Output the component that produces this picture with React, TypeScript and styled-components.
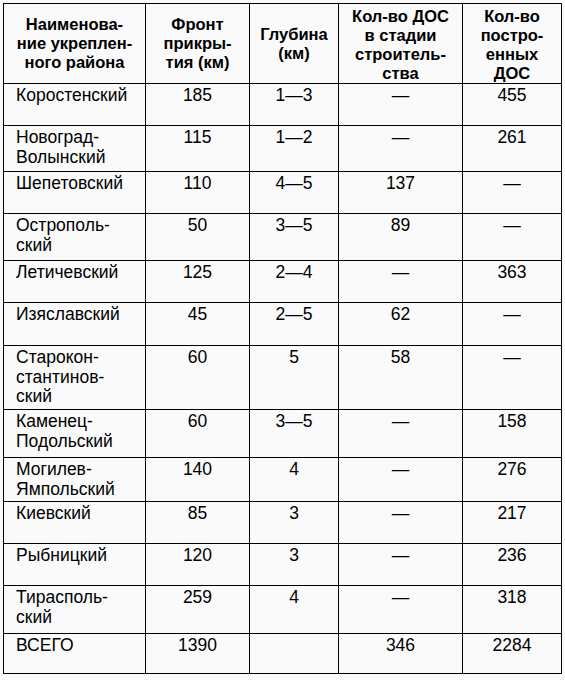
import React from 'react'
import { createGlobalStyle, styled } from 'styled-components'

type Row = {
  name: string[]
  front: string
  depth: string
  building: string
  built: string
  height: number
}

const rows: Row[] = [
  { name: ['Коростенский'], front: '185', depth: '1—3', building: '—', built: '455', height: 42 },
  { name: ['Новоград-', 'Волынский'], front: '115', depth: '1—2', building: '—', built: '261', height: 46 },
  { name: ['Шепетовский'], front: '110', depth: '4—5', building: '137', built: '—', height: 42 },
  { name: ['Острополь-', 'ский'], front: '50', depth: '3—5', building: '89', built: '—', height: 47 },
  { name: ['Летичевский'], front: '125', depth: '2—4', building: '—', built: '363', height: 42 },
  { name: ['Изяславский'], front: '45', depth: '2—5', building: '62', built: '—', height: 43 },
  { name: ['Старокон-', 'стантинов-', 'ский'], front: '60', depth: '5', building: '58', built: '—', height: 64 },
  { name: ['Каменец-', 'Подольский'], front: '60', depth: '3—5', building: '—', built: '158', height: 48 },
  { name: ['Могилев-', 'Ямпольский'], front: '140', depth: '4', building: '—', built: '276', height: 44 },
  { name: ['Киевский'], front: '85', depth: '3', building: '—', built: '217', height: 42 },
  { name: ['Рыбницкий'], front: '120', depth: '3', building: '—', built: '236', height: 42 },
  { name: ['Тирасполь-', 'ский'], front: '259', depth: '4', building: '—', built: '318', height: 48 },
  { name: ['ВСЕГО'], front: '1390', depth: '', building: '346', built: '2284', height: 40 },
]

const headers: string[][] = [
  ['Наименова-', 'ние укреплен-', 'ного района'],
  ['Фронт', 'прикры-', 'тия (км)'],
  ['Глубина', '(км)'],
  ['Кол-во ДОС', 'в стадии', 'строитель-', 'ства'],
  ['Кол-во', 'постро-', 'енных', 'ДОС'],
]

const widths = [142, 104, 89, 124, 99]

const Lines: React.FC<{ lines: string[] }> = ({ lines }) => (
  <>
    {lines.map((l, i) => (
      <React.Fragment key={i}>
        {i > 0 && <br />}
        {l}
      </React.Fragment>
    ))}
  </>
)

const App: React.FC = () => {
  return (
    <>
      <GlobalStyle />
      <Page>
        <Table>
          <colgroup>
            {widths.map((w, i) => (
              <col key={i} style={{ width: w }} />
            ))}
          </colgroup>
          <thead>
            <tr>
              {headers.map((h, i) => (
                <HeadCell key={i} $tall={h.length > 3}>
                  <Lines lines={h} />
                </HeadCell>
              ))}
            </tr>
          </thead>
          <tbody>
            {rows.map((r, i) => (
              <tr key={i} style={{ height: r.height }}>
                <NameCell>
                  <Lines lines={r.name} />
                </NameCell>
                <Cell>{r.front}</Cell>
                <Cell>{r.depth}</Cell>
                <Cell>{r.building}</Cell>
                <Cell>{r.built}</Cell>
              </tr>
            ))}
          </tbody>
        </Table>
      </Page>
    </>
  )
}

export default App

const GlobalStyle = createGlobalStyle`
  html, body {
    margin: 0;
    padding: 0;
    background: #fafafa;
  }
`

const Page = styled.div`
  width: 565px;
  height: 680px;
  padding: 3px 0 0 3px;
  box-sizing: border-box;
  font-family: "Liberation Sans", Arial, sans-serif;
  color: #000;
`

const Table = styled.table`
  border-collapse: collapse;
  table-layout: fixed;
  width: 558px;
`

const HeadCell = styled.th<{ $tall?: boolean }>`
  height: 80px;
  border: 1.5px solid #000;
  padding: ${(p) => (p.$tall ? '3px 2px 0' : '0 2px')};
  box-sizing: border-box;
  font-size: 16.5px;
  font-weight: bold;
  line-height: 19px;
  text-align: center;
  vertical-align: middle;
`

const Cell = styled.td`
  border: 1.5px solid #000;
  padding: 2px 4px 0;
  box-sizing: border-box;
  font-size: 17.5px;
  line-height: 19.5px;
  text-align: center;
  vertical-align: top;
`

const NameCell = styled(Cell)`
  text-align: left;
  padding-left: 12px;
`
